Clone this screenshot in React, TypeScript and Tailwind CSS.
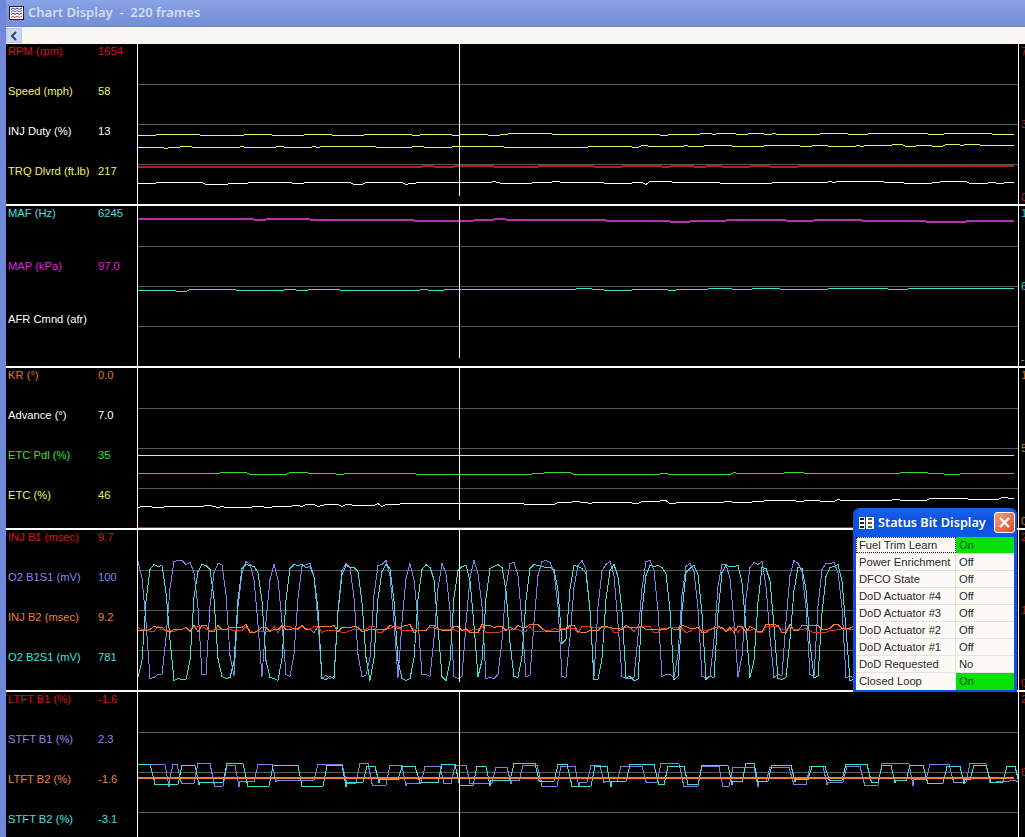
import React from "react";

type Point = [number, number];

interface Trace {
  color: string;
  points: Point[];
  width?: number;
}

interface Channel {
  label: string;
  value?: string;
  color: string;
}

interface PanelData {
  top: number;
  rowClass: string;
  channels: Channel[];
  axis: string[];
  axisColor: string;
  traces: Trace[];
}

const X_START = 138;
const X_END = 1015;
const CURSOR_X = 459;

const RED = "#c82020";
const DIM_RED = "#a82424";
const YELLOW = "#f0f060";
const CYAN = "#40e0d8";
const MAGENTA = "#b830b0";
const ORANGE = "#f08038";
const GREEN = "#30e030";
const PURPLE = "#8080e8";

// small seeded random so every render draws the same noise
function makeRandom(seed: number) {
  let s = seed;
  return () => {
    s = (s * 1664525 + 1013904223) % 4294967296;
    return s / 4294967296;
  };
}

// nearly flat log trace, sampled once per frame (4px), value holds between steps
function flat(y0: number, y1: number, amp: number, seed: number, xEnd = X_END, change = 0.25): Point[] {
  const rnd = makeRandom(seed);
  const pts: Point[] = [];
  let offset = 0;
  for (let x = X_START; x <= xEnd; x += 4) {
    const t = (x - X_START) / (X_END - X_START);
    if (rnd() < change) offset = (rnd() - 0.5) * 2 * amp;
    pts.push([x, Math.round(y0 + (y1 - y0) * t + offset) + 0.5]);
  }
  return pts;
}

// O2 sensor swing: rounded pulses between lo and hi
function swing(intervals: Point[], hi: number, lo: number, seed: number): Point[] {
  const rnd = makeRandom(seed);
  const ramp = 11;
  const pts: Point[] = [];
  for (let x = X_START; x <= 860; x += 4) {
    let level = 0;
    for (const [a, b] of intervals) {
      const d = Math.min(x - (a - ramp), b + ramp - x) / ramp;
      level = Math.max(level, Math.min(1, d));
    }
    const rounded = 1 - (1 - level) * (1 - level);
    const y = lo + (hi - lo) * rounded + (rnd() - 0.5) * 5;
    pts.push([x, Math.round(y) + 0.5]);
  }
  return pts;
}

// fuel trim square wave between two levels
function square(intervals: Point[], seed: number): Point[] {
  const rnd = makeRandom(seed);
  const pts: Point[] = [];
  let x = X_START;
  for (const [a, b] of intervals) {
    const hi = 763.5 + Math.round(rnd() * 4);
    const lo = 779.5 + Math.round(rnd() * 7);
    if (a > x) pts.push([x, lo], [a - 4, lo]);
    pts.push([a, hi], [b, hi], [b + 4, lo]);
    x = b + 4;
  }
  pts.push([X_END, 780.5]);
  return pts;
}

const o2Purple: Point[] = [
  [130, 138], [175, 191], [217, 220], [245, 250], [274, 274], [304, 310], [345, 348], [380, 386],
  [410, 410], [443, 443], [474, 475], [511, 514], [542, 551], [579, 583], [605, 610], [647, 651],
  [688, 691], [723, 726], [752, 761], [794, 799], [825, 835],
];

const o2Cyan: Point[] = [
  [152, 161], [200, 208], [244, 256], [292, 311], [345, 356], [384, 388], [424, 430], [460, 466],
  [492, 501], [532, 553], [575, 583], [612, 615], [649, 663], [689, 695], [725, 738], [764, 766],
  [799, 801], [829, 838],
];

const trimCyan: Point[] = [
  [138, 150], [182, 195], [227, 243], [273, 298], [327, 342], [367, 375], [402, 415], [442, 455],
  [477, 486], [514, 535], [558, 567], [595, 607], [630, 654], [668, 684], [702, 728], [746, 754],
  [772, 791], [812, 825], [846, 867], [882, 891], [910, 923], [947, 960], [974, 986], [1007, 1015],
];

const trimPurple: Point[] = [
  [138, 165], [173, 177], [198, 210], [227, 235], [258, 272], [318, 342], [360, 368], [390, 402],
  [425, 440], [455, 466], [496, 507], [523, 537], [561, 575], [591, 600], [621, 642], [661, 679],
  [702, 719], [733, 754], [770, 789], [810, 823], [847, 860], [882, 909], [930, 949], [970, 986],
];

const panels: PanelData[] = [
  {
    top: 44,
    rowClass: "h-[40px]",
    axis: ["7", "3", "0"],
    axisColor: "text-[#c02020]",
    channels: [
      { label: "RPM (rpm)", value: "1654", color: "text-[#d01818]" },
      { label: "Speed (mph)", value: "58", color: "text-[#f0f060]" },
      { label: "INJ Duty (%)", value: "13", color: "text-white" },
      { label: "TRQ Dlvrd (ft.lb)", value: "217", color: "text-[#f0f060]" },
    ],
    traces: [
      { color: YELLOW, points: flat(135, 133, 0.8, 11) },
      { color: YELLOW, points: flat(147, 145, 0.8, 23) },
      { color: DIM_RED, points: flat(166, 165, 0.4, 37), width: 2 },
      { color: "#ffffff", points: flat(183, 182, 1.2, 41) },
    ],
  },
  {
    top: 206,
    rowClass: "h-[53px]",
    axis: ["1", "6", "-"],
    axisColor: "text-[#30c8d0]",
    channels: [
      { label: "MAF (Hz)", value: "6245", color: "text-[#40e0e0]" },
      { label: "MAP (kPa)", value: "97.0", color: "text-[#e020e0]" },
      { label: "AFR Cmnd (afr)", color: "text-white" },
    ],
    traces: [
      { color: MAGENTA, points: flat(218.5, 220.5, 1, 53, X_END, 0.15), width: 2 },
      { color: CYAN, points: flat(290, 288, 0.8, 61) },
    ],
  },
  {
    top: 368,
    rowClass: "h-[40px]",
    axis: ["1", "5", "0"],
    axisColor: "text-[#d07020]",
    channels: [
      { label: "KR (°)", value: "0.0", color: "text-[#e07820]" },
      { label: "Advance (°)", value: "7.0", color: "text-white" },
      { label: "ETC Pdl (%)", value: "35", color: "text-[#30e030]" },
      { label: "ETC (%)", value: "46", color: "text-[#f0f060]" },
    ],
    traces: [
      { color: YELLOW, points: flat(455, 455, 0, 71) },
      { color: GREEN, points: flat(473, 473, 1, 83, X_END, 0.12) },
      { color: "#ffffff", points: flat(507, 498, 1.2, 97) },
      { color: RED, points: flat(527, 527, 0, 101) },
    ],
  },
  {
    top: 530,
    rowClass: "h-[40px]",
    axis: ["2", "1", "0"],
    axisColor: "text-[#c02020]",
    channels: [
      { label: "INJ B1 (msec)", value: "9.7", color: "text-[#d81818]" },
      { label: "O2 B1S1 (mV)", value: "100", color: "text-[#8888f0]" },
      { label: "INJ B2 (msec)", value: "9.2", color: "text-[#f08038]" },
      { label: "O2 B2S1 (mV)", value: "781", color: "text-[#40e0e0]" },
    ],
    traces: [
      { color: PURPLE, points: swing(o2Purple, 562, 676, 113) },
      { color: CYAN, points: swing(o2Cyan, 566, 678, 127) },
      { color: "#e03818", points: flat(629, 629, 3.5, 131, 860, 0.6) },
      { color: ORANGE, points: flat(628, 628, 4, 149, 860, 0.6) },
    ],
  },
  {
    top: 692,
    rowClass: "h-[40px]",
    axis: ["2", "0", "-"],
    axisColor: "text-[#c02020]",
    channels: [
      { label: "LTFT B1 (%)", value: "-1.6", color: "text-[#d81818]" },
      { label: "STFT B1 (%)", value: "2.3", color: "text-[#8888f0]" },
      { label: "LTFT B2 (%)", value: "-1.6", color: "text-[#f08038]" },
      { label: "STFT B2 (%)", value: "-3.1", color: "text-[#40e0e0]" },
    ],
    traces: [
      { color: PURPLE, points: square(trimPurple, 151) },
      { color: CYAN, points: square(trimCyan, 163) },
      { color: ORANGE, points: flat(777, 777, 0, 171), width: 2 },
    ],
  },
];

const statusRows = [
  { name: "Fuel Trim Learn", state: "On", focused: true },
  { name: "Power Enrichment", state: "Off" },
  { name: "DFCO State", state: "Off" },
  { name: "DoD Actuator #4", state: "Off" },
  { name: "DoD Actuator #3", state: "Off" },
  { name: "DoD Actuator #2", state: "Off" },
  { name: "DoD Actuator #1", state: "Off" },
  { name: "DoD Requested", state: "No" },
  { name: "Closed Loop", state: "On" },
];

function ChartIcon() {
  return (
    <svg width="15" height="14" viewBox="0 0 15 14" className="shrink-0">
      <rect x="0.5" y="0.5" width="14" height="13" fill="#ffffff" stroke="#181c50" />
      <path d="M2 3.5 L4 2 L6 3.5 L8 2 L10 3.5 L13 2" fill="none" stroke="#2030b0" />
      <path d="M2 6 L4 4.5 L6 6 L8 4.5 L10 6 L13 4.5" fill="none" stroke="#c83838" />
      <path d="M2 8.5 L4 7 L6 8.5 L8 7 L10 8.5 L13 7" fill="none" stroke="#2030b0" />
      <path d="M2 11.5 L4 10 L6 11.5 L8 10 L10 11.5 L13 10" fill="none" stroke="#c83838" />
    </svg>
  );
}

function BitsIcon() {
  return (
    <svg width="15" height="12" viewBox="0 0 15 12" className="shrink-0">
      <rect width="15" height="12" fill="#ffffff" />
      <rect x="1" y="1" width="4" height="2" fill="#202020" />
      <rect x="1" y="5" width="4" height="2" fill="#202020" />
      <rect x="1" y="9" width="4" height="2" fill="#202020" />
      <rect x="6" y="0" width="1" height="12" fill="#0a3cc8" />
      <rect x="9" y="1" width="4" height="2" fill="#208030" />
      <rect x="9" y="5" width="4" height="2" fill="#c03020" />
      <rect x="9" y="9" width="4" height="2" fill="#208030" />
    </svg>
  );
}

function ChartPanel({ panel, last }: { panel: PanelData; last?: boolean }) {
  const height = last ? 145 : 160;
  const cursorEnd = panel.top + 152;
  return (
    <div className={`flex ${last ? "h-[145px]" : "h-[162px] border-b-2 border-white"} overflow-hidden bg-black`}>
      <div className="w-[132px] shrink-0 border-r border-white pl-[2px]">
        {panel.channels.map((ch) => (
          <div key={ch.label} className={`flex ${panel.rowClass} leading-[14px] ${ch.color}`}>
            <span className="w-[90px] shrink-0 whitespace-nowrap">{ch.label}</span>
            {ch.value && <span>{ch.value}</span>}
          </div>
        ))}
      </div>
      <svg width="880" height={height} viewBox={`${X_START} ${panel.top} 880 ${height}`} className="shrink-0">
        {[40, 80, 120].map((offset) => (
          <line
            key={offset}
            x1={X_START}
            x2={1018}
            y1={panel.top + offset + 0.5}
            y2={panel.top + offset + 0.5}
            stroke="#585858"
          />
        ))}
        {panel.traces.map((trace, i) => (
          <polyline
            key={i}
            points={trace.points.map(([x, y]) => `${x},${y}`).join(" ")}
            fill="none"
            stroke={trace.color}
            strokeWidth={trace.width ?? 1}
            shapeRendering="crispEdges"
          />
        ))}
        <line x1={CURSOR_X + 0.5} x2={CURSOR_X + 0.5} y1={panel.top} y2={cursorEnd} stroke="#ffffff" />
      </svg>
      <div className="w-[7px] shrink-0 overflow-hidden border-l border-white">
        <div className={`flex h-[160px] w-[12px] flex-col justify-between pl-[2px] leading-[14px] ${panel.axisColor}`}>
          {panel.axis.map((tick, i) => (
            <span key={i}>{tick}</span>
          ))}
        </div>
      </div>
    </div>
  );
}

function StatusBitDisplay() {
  return (
    <div className="absolute left-[847px] top-[508px] w-[164px] rounded-t-[6px] bg-[#0b50e0] px-[3px] pb-[2px]">
      <div className="flex h-[29px] items-center gap-[4px] rounded-t-[6px] bg-gradient-to-b from-[#1a62ee] via-[#0a50e0] to-[#0c58e8] pl-[3px]">
        <BitsIcon />
        <span className="whitespace-nowrap font-['Noto_Sans',sans-serif] text-[12.7px] font-semibold text-white">
          Status Bit Display
        </span>
        <div className="ml-auto mr-[-1px] flex h-[21px] w-[21px] items-center justify-center rounded-[3px] border border-white bg-gradient-to-br from-[#f0a080] to-[#d84a20]">
          <svg width="13" height="13" viewBox="0 0 13 13">
            <path d="M2 2 L11 11 M11 2 L2 11" stroke="#ffffff" strokeWidth="2.4" />
          </svg>
        </div>
      </div>
      <div className="bg-[#fcfbf6] text-[#282828]">
        {statusRows.map((row) => (
          <div key={row.name} className="flex h-[17px] border-b border-[#e6e4da] leading-[16px] last:border-b-0">
            <div
              className={`w-[100px] shrink-0 whitespace-nowrap border-r border-[#e6e4da] pl-[3px] ${
                row.focused ? "outline-1 -outline-offset-1 outline-dotted outline-[#222]" : ""
              }`}
            >
              {row.name}
            </div>
            <div className={`flex-1 pl-[3px] ${row.state === "On" ? "bg-[#06e006] text-[#185018]" : ""}`}>
              {row.state}
            </div>
          </div>
        ))}
      </div>
    </div>
  );
}

export default function App() {
  return (
    <div className="relative h-[837px] w-[1025px] overflow-hidden border-l-[6px] border-[#7088dc] font-['Liberation_Sans',sans-serif] text-[11.2px]">
      {/* Title bar */}
      <div className="ml-[-6px] flex h-[27px] items-center gap-[4px] border-b border-[#6a80c8] bg-gradient-to-b from-[#8aa4e4] via-[#7a96dc] to-[#7690d8] pl-[9px]">
        <ChartIcon />
        <span className="whitespace-pre font-['Noto_Sans',sans-serif] text-[13px] font-semibold text-[#d4dcf2]">
          Chart Display  -  220 frames
        </span>
      </div>

      {/* Toolbar */}
      <div className="flex h-[17px] items-start bg-[#f8f7f2] pt-[1px]">
        <div className="flex h-[15px] w-[16px] items-center justify-center border border-[#b8c8ec] bg-[#c8d6f4]">
          <svg width="8" height="10" viewBox="0 0 8 10">
            <path d="M6 1 L2 5 L6 9" fill="none" stroke="#304468" strokeWidth="2" />
          </svg>
        </div>
      </div>

      {panels.map((panel, i) => (
        <ChartPanel key={panel.top} panel={panel} last={i === panels.length - 1} />
      ))}

      <StatusBitDisplay />
    </div>
  );
}
